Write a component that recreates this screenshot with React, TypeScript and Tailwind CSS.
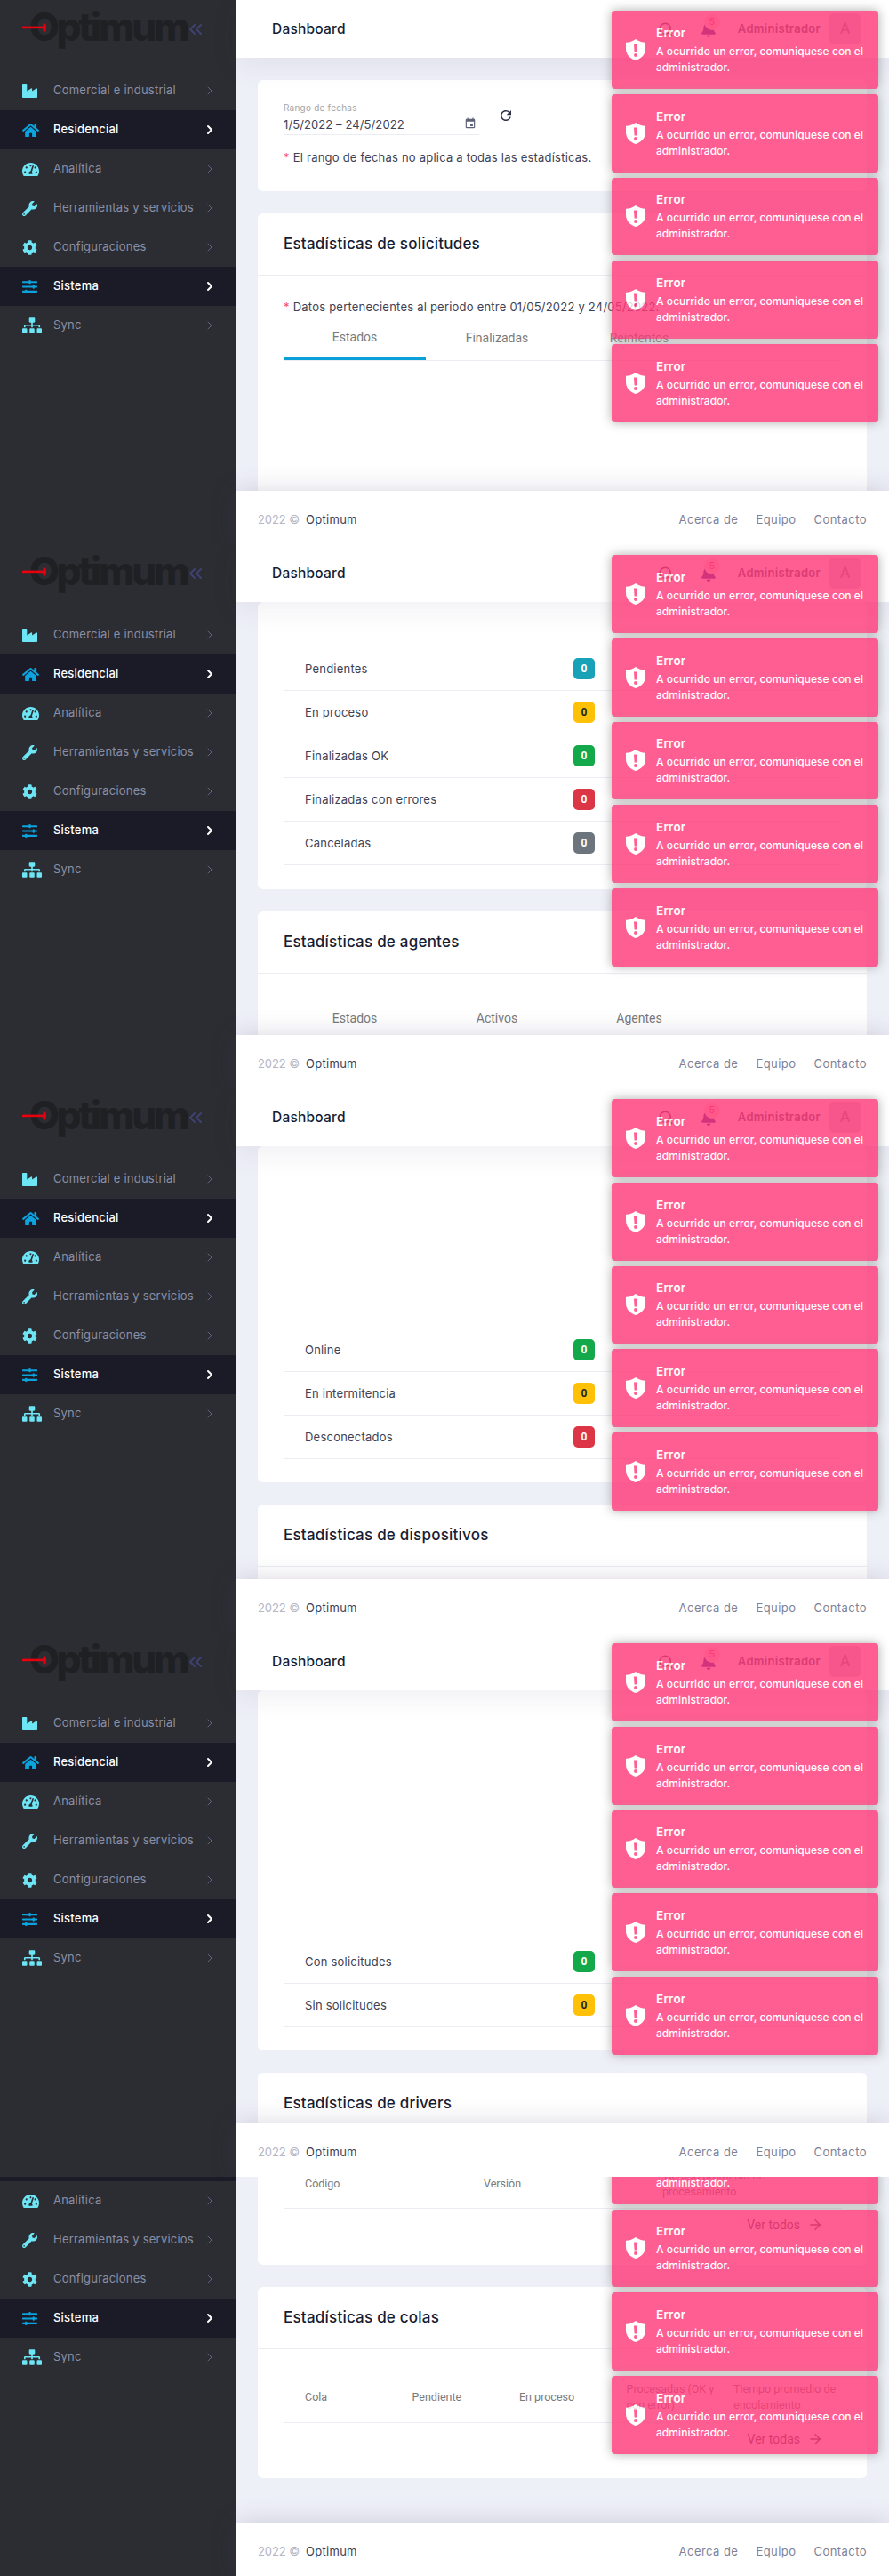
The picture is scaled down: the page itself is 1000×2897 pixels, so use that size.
import React from "react";
import { ChevronRight, ChevronsLeft, Search, ArrowRight } from "lucide-react";
import { FaIndustry, FaHome, FaTachometerAlt, FaWrench, FaCog, FaSlidersH, FaSitemap, FaBell } from "react-icons/fa";
import { MdEvent, MdRefresh } from "react-icons/md";

const P = "font-[Inter,sans-serif] tracking-[0.22px]";

const menu = [
  { label: "Comercial e industrial", Icon: FaIndustry, size: 17, active: false },
  { label: "Residencial", Icon: FaHome, size: 19, active: true },
  { label: "Analítica", Icon: FaTachometerAlt, size: 19, active: false },
  { label: "Herramientas y servicios", Icon: FaWrench, size: 17, active: false },
  { label: "Configuraciones", Icon: FaCog, size: 17, active: false },
  { label: "Sistema", Icon: FaSlidersH, size: 17, active: true },
  { label: "Sync", Icon: FaSitemap, size: 22, active: false },
];

function Sidebar({ scrolled }: { scrolled?: boolean }) {
  return (
    <aside className="w-[265px] shrink-0 bg-[#2b2d32] overflow-hidden">
      <div className={scrolled ? "-mt-[163px]" : ""}>
        <div className="relative h-[80px] pl-[33px] pt-[3px] flex items-start">
          <span className="font-[Inter,sans-serif] font-extrabold text-[#1f2023] text-[44px] leading-[54px] tracking-[-3.4px]">Optimum</span>
          <svg className="absolute left-[25px] top-[26px]" width="28" height="10" viewBox="0 0 28 10">
            <rect x="0" y="3.6" width="27" height="2.6" fill="#e8000f" />
            <rect x="23.5" y="0.5" width="3" height="9" rx="1" fill="#e8000f" />
          </svg>
          <ChevronsLeft className="absolute left-[208px] top-[21px] text-[#3f4270]" size={24} strokeWidth={2} />
        </div>
        {menu.map(({ label, Icon, size, active }) => (
          <div key={label} className={`flex items-center h-[44px] pl-[25px] pr-[21px] ${active ? "bg-[#1b1b28]" : ""}`}>
            <span className={`w-[35px] flex items-center ${active ? "text-[#0ba4df]" : "text-[#6ee5f5]"}`}>
              <Icon size={size} />
            </span>
            <span className={`flex-1 text-[13px] ${P} ${active ? "text-white font-medium" : "text-[#8a8fa6]"}`}>{label}</span>
            {active ? (
              <ChevronRight size={16} strokeWidth={3} className="text-white" />
            ) : (
              <ChevronRight size={16} strokeWidth={1.5} className="text-[#5f6480]" />
            )}
          </div>
        ))}
      </div>
    </aside>
  );
}

function Header() {
  return (
    <header className="relative z-10 h-[65px] shrink-0 bg-white flex items-center pl-[41px] shadow-[0_10px_30px_rgba(82,63,105,0.08)]">
      <h1 className={`text-[15.5px] font-medium text-[#181c32] ${P}`}>Dashboard</h1>
      <div className="ml-auto flex items-center pr-[32px]">
        <Search size={18} strokeWidth={2.2} className="text-[#3f4254]" />
        <span className="relative ml-[30px] text-[#23238f]">
          <FaBell size={18} />
          <span className="absolute -top-[8px] left-[4px] w-[18px] h-[18px] rounded-full bg-[#ffe2e5] text-[#f64e60] text-[11px] flex items-center justify-center font-[Inter,sans-serif]">5</span>
        </span>
        <span className="ml-[24px] text-[13px] font-semibold text-[#4a4f66] font-[Inter,sans-serif] tracking-[0.3px]">Administrador</span>
        <span className="ml-[10px] w-[35px] h-[35px] rounded-[5px] bg-[#d4d4dc] flex items-center justify-center text-[17px] text-[#7e8299] font-[Inter,sans-serif]">A</span>
      </div>
    </header>
  );
}

function Footer() {
  return (
    <footer className="relative z-10 h-[60px] shrink-0 bg-white flex items-center px-[25px] pt-[5px] text-[13px] font-[Inter,sans-serif] shadow-[0_0_28px_rgba(82,63,105,0.22)]">
      <span className="text-[#b5b5c3] tracking-[-0.1px]">2022 ©</span>
      <span className="ml-[7px] text-[#3f4254] tracking-[0.3px]">Optimum</span>
      <nav className="ml-auto flex gap-[20px] text-[#7e8299] tracking-[0.45px]">
        <span>Acerca de</span>
        <span>Equipo</span>
        <span>Contacto</span>
      </nav>
    </footer>
  );
}

function Shield() {
  return (
    <svg width="22" height="24" viewBox="0 0 22 24" className="shrink-0">
      <path
        fill="#fff"
        fillRule="evenodd"
        d="M11 0C14 2.4 18 3.6 22 3.8V11C22 17.5 17 22 11 24C5 22 0 17.5 0 11V3.8C4 3.6 8 2.4 11 0ZM9 5.5L9.6 14.5H12.4L13 5.5ZM11 16A2 2 0 1 0 11 20A2 2 0 1 0 11 16Z"
      />
    </svg>
  );
}

function Toasts({ scrolled }: { scrolled?: boolean }) {
  return (
    <div className={`absolute right-[12px] z-20 w-[300px] flex flex-col gap-[6px] ${scrolled ? "-top-[151px]" : "top-[12px]"}`}>
      {[0, 1, 2, 3, 4].map((i) => (
        <div key={i} className="h-[87.75px] rounded-[4px] bg-[#ff3777] opacity-80 shadow-[0_0_12px_#999] flex items-center pl-[16px] text-white">
          <Shield />
          <div className="ml-[12px] flex-1 font-[Inter,sans-serif]">
            <div className="text-[13.5px] font-semibold leading-[20px] mb-[2px] tracking-[0.22px]">Error</div>
            <div className="text-[12px] font-medium leading-[18px] pr-[10px] tracking-[0.06px]">A ocurrido un error, comuniquese con el administrador.</div>
          </div>
        </div>
      ))}
    </div>
  );
}

function Card({ children, className = "" }: { children?: React.ReactNode; className?: string }) {
  return <div className={`bg-white rounded-[6px] ${className}`}>{children}</div>;
}

function CardTitle({ children }: { children: React.ReactNode }) {
  return (
    <div className="h-[70px] shrink-0 flex items-center px-[29px] border-b-[1.5px] border-[#ebedf3]">
      <h2 className={`text-[17px] font-medium text-[#181c32] ${P}`}>{children}</h2>
    </div>
  );
}

function Note({ children }: { children: React.ReactNode }) {
  return (
    <p className={`text-[13px] text-[#3f4254] ${P}`}>
      <span className="text-[#f64e60] mr-[4px]">*</span>
      {children}
    </p>
  );
}

const badges: Record<string, string> = {
  info: "bg-[#17a2b8] text-white",
  warning: "bg-[#ffc107] text-[#212529]",
  success: "bg-[#13a84a] text-white",
  danger: "bg-[#dc3545] text-white",
  muted: "bg-[#6c757d] text-white",
};

function StatRows({ rows }: { rows: [string, string][] }) {
  return (
    <div className="mx-[29px] w-[628px]">
      {rows.map(([label, kind]) => (
        <div key={label} className="h-[49px] flex items-center pl-[24px] border-b-[1.5px] border-[#ebedf3]">
          <span className={`w-[302px] pt-[2px] text-[13px] text-[#3f4254] ${P}`}>{label}</span>
          <span className={`w-[24px] h-[24px] rounded-[5px] flex items-center justify-center text-[12px] font-bold font-[Roboto,sans-serif] ${badges[kind]}`}>0</span>
        </div>
      ))}
    </div>
  );
}

function TabLabels({ labels, activeFirst }: { labels: string[]; activeFirst?: boolean }) {
  return (
    <div className={`mx-[29px] w-[628px] flex font-[Roboto,sans-serif] text-[14px] text-[#7a7a7a] ${activeFirst ? "border-b-[1.5px] border-[#ebedf3]" : ""}`}>
      {labels.map((l, i) => (
        <div key={l} className={`w-[160px] flex items-center justify-center ${activeFirst ? "h-[48px]" : "h-[40px]"} ${activeFirst && i === 0 ? "border-b-[3px] border-[#0b9fd8] -mb-[1.5px]" : ""}`}>
          {l}
        </div>
      ))}
    </div>
  );
}

function Content({ children, className = "" }: { children: React.ReactNode; className?: string }) {
  return <div className={`flex-1 min-h-0 overflow-hidden bg-[#eef0f8] px-[25px] ${className}`}>{children}</div>;
}

function Tile1() {
  return (
    <Content className="pt-[25px]">
      <Card className="h-[125px] px-[29px] pt-[24px]">
        <div className="flex items-start">
          <div className="w-[220px] h-[38px] border-b-[1.5px] border-[#ebedf3] relative">
            <div className={`text-[10px] leading-[14px] text-[#a5a5a5] ${P}`}>Rango de fechas</div>
            <div className="text-[13px] leading-[24px] text-[#3f4254] font-[Inter,sans-serif] tracking-[0.1px]">1/5/2022 – 24/5/2022</div>
            <MdEvent size={14} className="absolute right-[3px] top-[18px] text-[#5e6278]" />
          </div>
          <MdRefresh size={18} className="ml-[21px] mt-[7px] text-[#2a2f45]" />
        </div>
        <div className="mt-[16px]">
          <Note>El rango de fechas no aplica a todas las estadísticas.</Note>
        </div>
      </Card>
      <Card className="mt-[25px] h-[400px]">
        <CardTitle>Estadísticas de solicitudes</CardTitle>
        <div className="px-[29px] pt-[26px] pb-[1px]">
          <Note>Datos pertenecientes al periodo entre 01/05/2022 y 24/05/2022.</Note>
        </div>
        <TabLabels labels={["Estados", "Finalizadas", "Reintentos"]} activeFirst />
      </Card>
    </Content>
  );
}

function Tile2() {
  return (
    <Content>
      <Card className="pt-[51px] pb-[27px]">
        <StatRows rows={[["Pendientes", "info"], ["En proceso", "warning"], ["Finalizadas OK", "success"], ["Finalizadas con errores", "danger"], ["Canceladas", "muted"]]} />
      </Card>
      <Card className="mt-[25px] h-[200px]">
        <CardTitle>Estadísticas de agentes</CardTitle>
        <div className="pt-[30px]">
          <TabLabels labels={["Estados", "Activos", "Agentes"]} />
        </div>
      </Card>
    </Content>
  );
}

function Tile3() {
  return (
    <Content>
      <Card className="pt-[205px] pb-[26px]">
        <StatRows rows={[["Online", "success"], ["En intermitencia", "warning"], ["Desconectados", "danger"]]} />
      </Card>
      <Card className="mt-[25px] h-[200px]">
        <CardTitle>Estadísticas de dispositivos</CardTitle>
      </Card>
    </Content>
  );
}

function Tile4() {
  return (
    <Content>
      <Card className="pt-[281px] pb-[26px]">
        <StatRows rows={[["Con solicitudes", "success"], ["Sin solicitudes", "warning"]]} />
      </Card>
      <Card className="mt-[25px] h-[200px]">
        <CardTitle>Estadísticas de drivers</CardTitle>
      </Card>
    </Content>
  );
}

function SeeAll({ label }: { label: string }) {
  return (
    <div className="mx-[29px] w-[628px] h-[36px] flex items-center justify-end font-[Roboto,sans-serif] text-[14px] text-[#3f4254] pr-[21px]">
      {label}
      <ArrowRight size={18} strokeWidth={1.8} className="ml-[8px]" />
    </div>
  );
}

function HeadCell({ children, wide }: { children: React.ReactNode; wide?: boolean }) {
  return <div className={`leading-[18px] whitespace-nowrap ${wide ? "w-[201px]" : "w-[120.5px]"}`}>{children}</div>;
}

function Tile5() {
  return (
    <Content>
      <Card className="-mt-[20px] h-[119px]">
        <div className="mx-[29px] w-[628px] h-[56px] flex items-center pl-[24px] border-b-[1.5px] border-[#ebedf3] font-[Roboto,sans-serif] text-[12.5px] text-[#7a7a7a]">
          <HeadCell wide>Código</HeadCell>
          <HeadCell wide>Versión</HeadCell>
          <HeadCell>Tiempo promedio de<br />procesamiento</HeadCell>
        </div>
        <SeeAll label="Ver todos" />
      </Card>
      <Card className="mt-[25px] h-[215px]">
        <CardTitle>Estadísticas de colas</CardTitle>
        <div className="mx-[29px] w-[628px] mt-[26px] h-[57px] flex items-center pl-[24px] border-b-[1.5px] border-[#ebedf3] font-[Roboto,sans-serif] text-[12.5px] text-[#7a7a7a]">
          <HeadCell>Cola</HeadCell>
          <HeadCell>Pendiente</HeadCell>
          <HeadCell>En proceso</HeadCell>
          <HeadCell>Procesadas (OK y<br />con error)</HeadCell>
          <HeadCell>Tiempo promedio de<br />encolamiento</HeadCell>
        </div>
        <SeeAll label="Ver todas" />
      </Card>
    </Content>
  );
}

function Tile({ children, height = "h-[612px]", scrolled }: { children: React.ReactNode; height?: string; scrolled?: boolean }) {
  return (
    <section className={`relative flex overflow-hidden ${height}`}>
      <Sidebar scrolled={scrolled} />
      <main className="flex-1 min-w-0 flex flex-col">
        {!scrolled && <Header />}
        {children}
        <Footer />
      </main>
      <Toasts scrolled={scrolled} />
    </section>
  );
}

export default function App() {
  return (
    <div className="w-[1000px]">
      <Tile><Tile1 /></Tile>
      <Tile><Tile2 /></Tile>
      <Tile><Tile3 /></Tile>
      <Tile><Tile4 /></Tile>
      <Tile height="h-[449px]" scrolled><Tile5 /></Tile>
    </div>
  );
}
